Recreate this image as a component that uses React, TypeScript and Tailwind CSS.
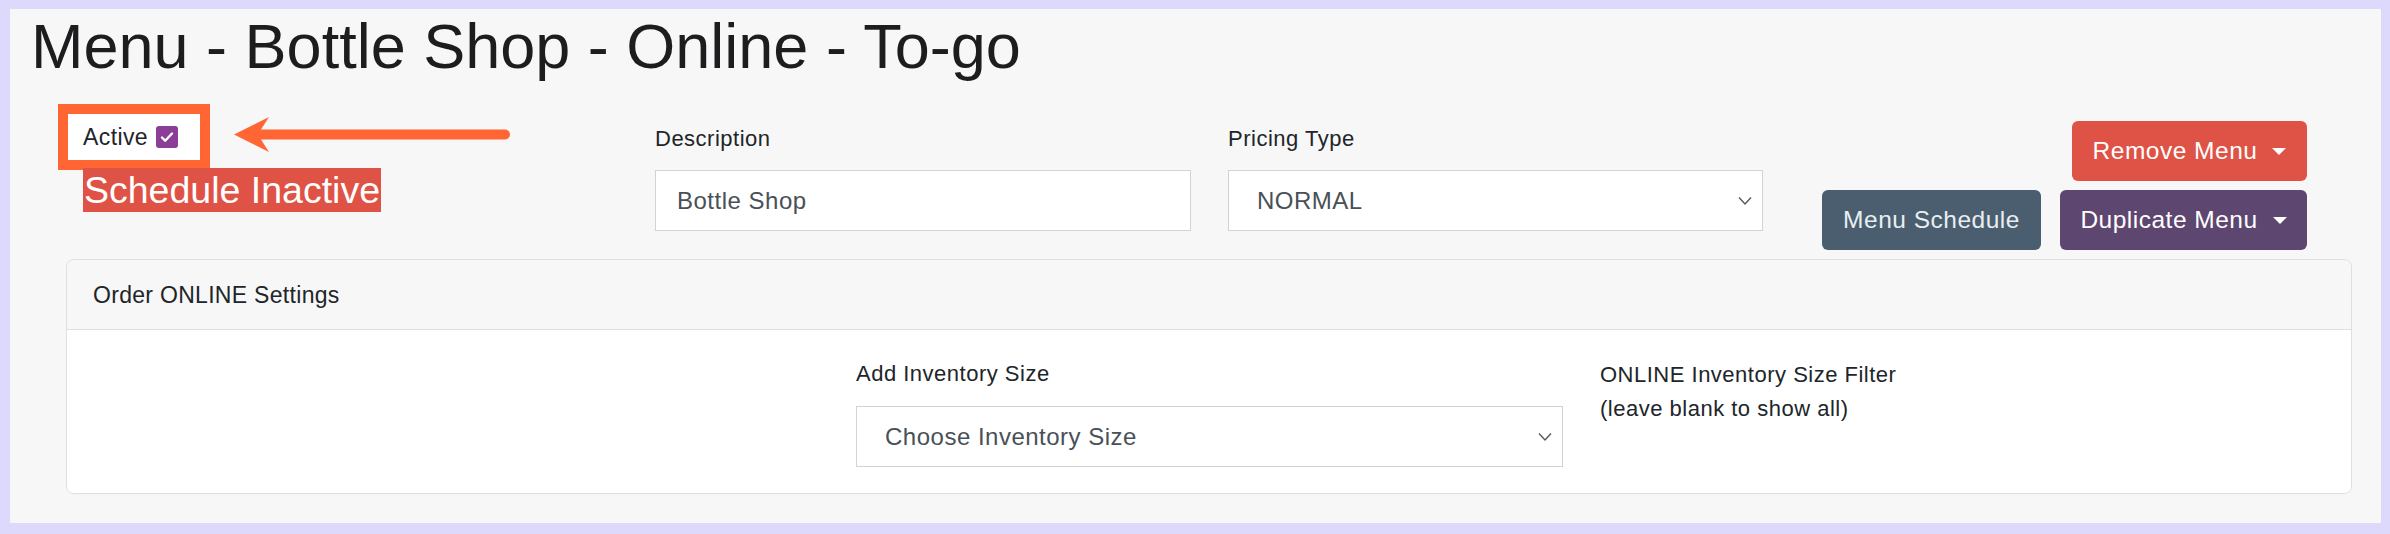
const helv = { fontFamily: '"Liberation Sans", Arial, Helvetica, sans-serif' };

function SelectChevron() {
  return (
    <svg width="14" height="9" viewBox="0 0 14 9" className="absolute right-[10px] top-1/2 -translate-y-1/2">
      <polyline points="1,1 7,7.5 13,1" fill="none" stroke="#55595e" strokeWidth="1.4" />
    </svg>
  );
}

function Caret() {
  return <span className="ml-[15px] inline-block w-0 h-0 border-x-[7px] border-x-transparent border-t-[7px] border-t-white" />;
}

export default function App() {
  return (
    <div className="bg-[#dcd9fc] pt-[9px] pl-[10px] pr-[9px] pb-[11px] h-[534px]" style={helv}>
      <div className="bg-[#f7f7f7] h-full flex flex-col text-[#212529] text-[22px] leading-[32px] tracking-[0.5px]">
        <h1 className="pl-[21px] text-[63px] leading-[74px] tracking-normal text-[#1d1d1f]">
          Menu - Bottle Shop - Online - To-go
        </h1>

        <div className="flex mt-[21px] h-[146px]">
          {/* Active + annotation */}
          <div className="relative ml-[48px] w-[597px]">
            <div className="w-[152px] h-[66px] border-[10px] border-[#ff6633] bg-white flex items-center pl-[15px] text-[23px] tracking-[0.4px]">
              <span>Active</span>
              <span className="ml-[8px] w-[22px] h-[22px] rounded-[3px] bg-[#8b3d98] flex items-center justify-center">
                <svg width="16" height="16" viewBox="0 0 16 16">
                  <path d="M3 8.5l3.2 3.2L13 4.5" fill="none" stroke="white" strokeWidth="2.4" strokeLinecap="round" strokeLinejoin="round" />
                </svg>
              </span>
            </div>
            <div className="ml-[25px] -mt-[2px] w-[298px] h-[44px] bg-[#df5246] text-white text-[37.5px] leading-[44px] tracking-normal pl-[1px] whitespace-nowrap">
              Schedule Inactive
            </div>
            <svg className="absolute left-[176px] top-[13px]" width="278" height="35" viewBox="0 0 278 35">
              <line x1="27" y1="17.5" x2="271" y2="17.5" stroke="#ff6633" strokeWidth="10" strokeLinecap="round" />
              <polygon points="0,17.5 35,0 27,12.5 27,22.5 35,35" fill="#ff6633" />
            </svg>
          </div>

          {/* Description */}
          <div className="w-[573px] pt-[19px]">
            <div>Description</div>
            <div className="mt-[15px] w-[536px] h-[61px] bg-white border border-[#ced4da] flex items-center pl-[21px] text-[24px] text-[#495057]">
              Bottle Shop
            </div>
          </div>

          {/* Pricing type */}
          <div className="w-[535px] pt-[19px]">
            <div>Pricing Type</div>
            <div className="relative mt-[15px] w-[535px] h-[61px] bg-white border border-[#ced4da] flex items-center pl-[28px] text-[24px] text-[#495057]">
              NORMAL
              <SelectChevron />
            </div>
          </div>

          {/* Buttons */}
          <div className="flex-1 flex flex-col items-end pt-[17px] pr-[74px] gap-[9px] text-[24.5px] text-white">
            <button className="h-[60px] w-[235px] rounded-[6px] bg-[#df5246] flex items-center justify-center">
              Remove Menu
              <Caret />
            </button>
            <div className="flex gap-[19px]">
              <button className="h-[60px] w-[219px] rounded-[6px] bg-[#4a5e6f] text-[#e9eef2] flex items-center justify-center">
                Menu Schedule
              </button>
              <button className="h-[60px] w-[247px] rounded-[6px] bg-[#5d466f] flex items-center justify-center">
                Duplicate Menu
                <Caret />
              </button>
            </div>
          </div>
        </div>

        {/* Card */}
        <div className="mt-[9px] ml-[56px] mr-[29px] border border-[#dfdfdf] rounded-[8px] overflow-hidden">
          <div className="h-[70px] flex items-center pl-[26px] border-b border-[#dfdfdf] bg-[#f7f7f7] text-[23px] tracking-[0.3px]">
            Order ONLINE Settings
          </div>
          <div className="bg-white flex pt-[28px] pb-[26px] pl-[789px]">
            <div className="w-[707px]">
              <div>Add Inventory Size</div>
              <div className="relative mt-[16px] h-[61px] border border-[#ced4da] flex items-center pl-[28px] text-[24px] text-[#495057]">
                Choose Inventory Size
                <SelectChevron />
              </div>
            </div>
            <div className="ml-[37px] leading-[34px]">
              <div>ONLINE Inventory Size Filter</div>
              <div>(leave blank to show all)</div>
            </div>
          </div>
        </div>
      </div>
    </div>
  );
}
